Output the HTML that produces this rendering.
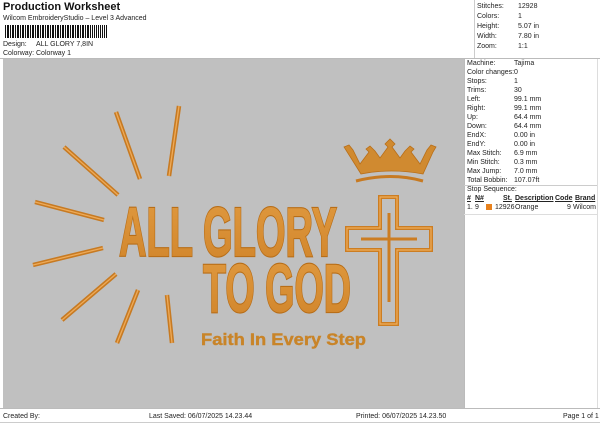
<!DOCTYPE html>
<html><head><style>
*{margin:0;padding:0;box-sizing:border-box}
body{width:600px;height:424px;background:#fff;font-family:"Liberation Sans",sans-serif;color:#222;position:relative;overflow:hidden;font-size:7px}
.a{position:absolute;white-space:nowrap}
</style></head><body>
<div class="a" style="left:3px;top:1px;font-size:11px;font-weight:bold;color:#111">Production Worksheet</div>
<div class="a" style="left:3px;top:15px">Wilcom EmbroideryStudio – Level 3 Advanced</div>
<div class="a" style="left:5px;top:25px;width:102px;height:13px;background:repeating-linear-gradient(90deg,#111 0 1px,#fff 1px 2px,#111 2px 3px,#111 3px 4px,#fff 4px 5px)"></div>
<div class="a" style="left:88px;top:25px;width:19px;height:13px;background:#fff"></div>
<div class="a" style="left:88px;top:25px;width:19px;height:13px;background:repeating-linear-gradient(90deg,#111 0 1px,#fff 1px 2px)"></div>
<div class="a" style="left:83px;top:33px;font-size:6px">,</div>
<div class="a" style="left:3px;top:41px">Design:</div><div class="a" style="left:36px;top:41px">ALL GLORY 7,8IN</div>
<div class="a" style="left:3px;top:50px">Colorway:</div><div class="a" style="left:36px;top:50px">Colorway 1</div>
<div class="a" style="left:474px;top:0;width:1px;height:58px;background:#ccc"></div>
<div class="a" style="left:477px;top:2px;line-height:10px">Stitches:<br>Colors:<br>Height:<br>Width:<br>Zoom:</div>
<div class="a" style="left:518px;top:2px;line-height:10px">12928<br>1<br>5.07 in<br>7.80 in<br>1:1</div>
<div class="a" style="left:0;top:58px;width:600px;height:1px;background:#bbb"></div>
<div class="a" style="left:3px;top:59px;width:461px;height:349px;background:#c0c0c0"></div>
<div class="a" style="left:464px;top:59px;width:1px;height:349px;background:#bbb"></div>
<div class="a" style="left:597px;top:59px;width:1px;height:349px;background:#ddd"></div>
<div class="a" style="left:467px;top:59px;line-height:9px">Machine:<br>Color changes:<br>Stops:<br>Trims:<br>Left:<br>Right:<br>Up:<br>Down:<br>EndX:<br>EndY:<br>Max Stitch:<br>Min Stitch:<br>Max Jump:<br>Total Bobbin:</div>
<div class="a" style="left:514px;top:59px;line-height:9px">Tajima<br>0<br>1<br>30<br>99.1 mm<br>99.1 mm<br>64.4 mm<br>64.4 mm<br>0.00 in<br>0.00 in<br>6.9 mm<br>0.3 mm<br>7.0 mm<br>107.07ft</div>
<div class="a" style="left:464px;top:185px;width:133px;height:1px;background:#ccc"></div>
<div class="a" style="left:467px;top:186px">Stop Sequence:</div>
<div class="a" style="left:467px;top:195px;font-weight:bold;text-decoration:underline">#</div>
<div class="a" style="left:475px;top:195px;font-weight:bold;text-decoration:underline">N#</div>
<div class="a" style="left:503px;top:195px;font-weight:bold;text-decoration:underline">St.</div>
<div class="a" style="left:515px;top:195px;font-weight:bold;text-decoration:underline">Description</div>
<div class="a" style="left:555px;top:195px;font-weight:bold;text-decoration:underline">Code</div>
<div class="a" style="left:575px;top:195px;font-weight:bold;text-decoration:underline">Brand</div>
<div class="a" style="left:467px;top:204px">1.</div><div class="a" style="left:475px;top:204px">9</div>
<div class="a" style="left:486px;top:204px;width:6px;height:6px;background:#e8821e"></div>
<div class="a" style="left:495px;top:204px">12926</div><div class="a" style="left:515px;top:204px">Orange</div>
<div class="a" style="left:567px;top:204px">9</div><div class="a" style="left:573px;top:204px">Wilcom</div>
<div class="a" style="left:464px;top:214px;width:133px;height:1px;background:#ddd"></div>
<div class="a" style="left:0;top:408px;width:600px;height:1px;background:#bbb"></div>
<div class="a" style="left:3px;top:413px">Created By:</div>
<div class="a" style="left:149px;top:413px">Last Saved: 06/07/2025 14.23.44</div>
<div class="a" style="left:356px;top:413px">Printed: 06/07/2025 14.23.50</div>
<div class="a" style="left:563px;top:413px">Page 1 of 1</div>
<div class="a" style="left:0;top:422px;width:600px;height:1px;background:#ccc"></div>
<svg class="a" style="left:0;top:0" width="600" height="424">
<defs><linearGradient id="g" x1="0" x2="0" y1="0" y2="1"><stop offset="0" stop-color="#e09a40"/><stop offset="1" stop-color="#d0842a"/></linearGradient></defs>
<g stroke="#c77a22" stroke-width="4.5" stroke-linecap="butt">
<line x1="116" y1="112" x2="140" y2="179"/><line x1="179" y1="106" x2="169" y2="176"/>
<line x1="64" y1="147" x2="118" y2="195"/><line x1="35" y1="202" x2="104" y2="220"/>
<line x1="33" y1="265" x2="103" y2="248"/><line x1="62" y1="320" x2="116" y2="274"/>
<line x1="138" y1="290" x2="117" y2="343"/><line x1="167" y1="295" x2="172" y2="343"/>
</g>
<g stroke="#eeaa58" stroke-width="1.3">
<line x1="116" y1="112" x2="140" y2="179"/><line x1="179" y1="106" x2="169" y2="176"/>
<line x1="64" y1="147" x2="118" y2="195"/><line x1="35" y1="202" x2="104" y2="220"/>
<line x1="33" y1="265" x2="103" y2="248"/><line x1="62" y1="320" x2="116" y2="274"/>
<line x1="138" y1="290" x2="117" y2="343"/><line x1="167" y1="295" x2="172" y2="343"/>
</g>
<g font-family="'Liberation Sans Narrow','Liberation Sans',sans-serif" font-weight="bold" fill="url(#g)" stroke="#b86e18" stroke-width="2.2" paint-order="stroke">
<text x="119" y="256" font-size="70" textLength="218" lengthAdjust="spacingAndGlyphs">ALL GLORY</text>
<text x="203" y="312" font-size="69" textLength="148" lengthAdjust="spacingAndGlyphs">TO GOD</text>
</g>
<text x="201" y="345" font-family="'Liberation Sans',sans-serif" font-weight="bold" font-size="17" fill="#c98428" stroke="#c98428" stroke-width=".4" textLength="165" lengthAdjust="spacingAndGlyphs">Faith In Every Step</text>
<path d="M380 197H397V228H431V250H397V324H380V250H347V228H380Z" fill="none" stroke="#cc7d22" stroke-width="4"/>
<path d="M380 197H397V228H431V250H397V324H380V250H347V228H380Z" fill="none" stroke="#efae5c" stroke-width="1.2"/>
<path d="M389 213V302M361 239H417" stroke="#cc7d22" stroke-width="3"/>
<path d="M344 147L349 145L353 150L360 164L369 152L366 149L370 146L375 151L380 158L388 147L385 144L390 139L395 144L392 147L400 158L405 151L410 146L414 149L411 152L420 164L427 150L431 145L436 147L433 152L423 174Q391 168 361 174Z" fill="#d08a30" stroke="#b86e18" stroke-width=".8"/>
<path d="M356 181Q391 172 423 181" fill="none" stroke="#c77a22" stroke-width="3"/>
</svg>
</body></html>
